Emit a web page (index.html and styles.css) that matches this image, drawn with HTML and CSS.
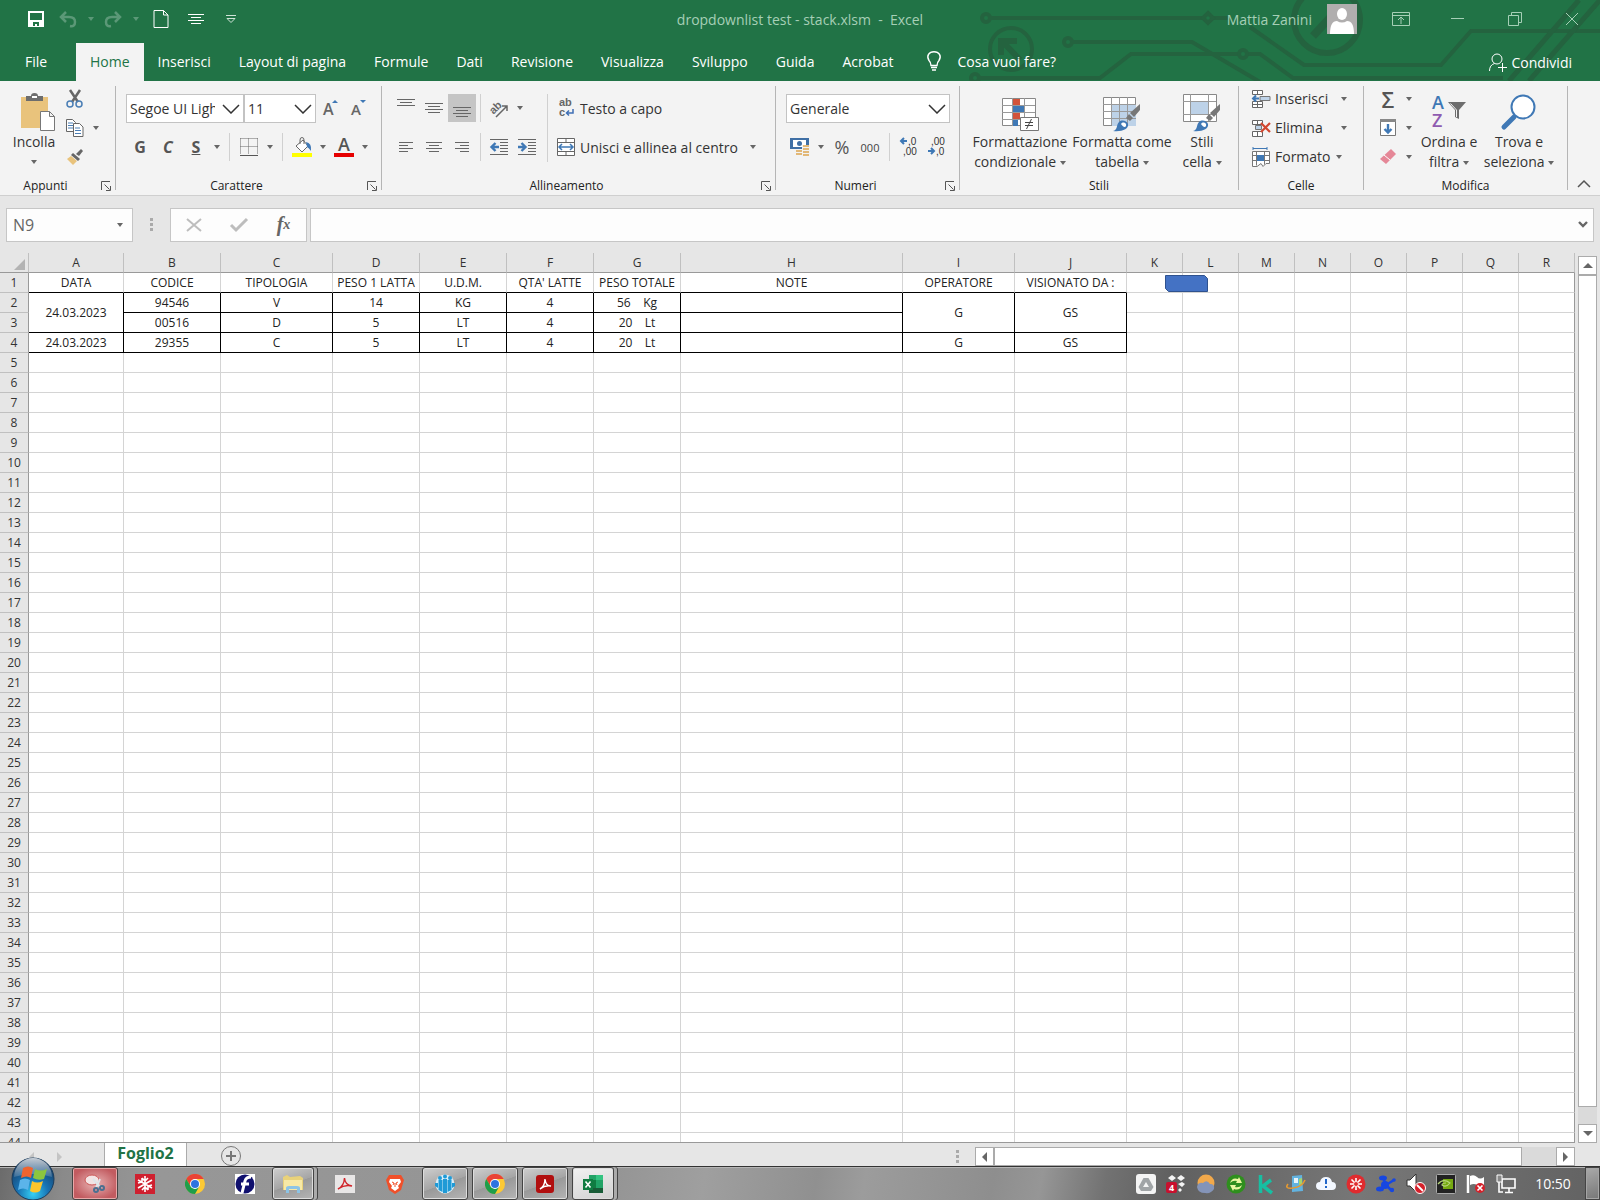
FILE: index.html
```html
<!DOCTYPE html>
<html lang="it">
<head>
    <meta charset="UTF-8">
    <meta name="viewport" content="width=device-width, initial-scale=1.0">
    <title>dropdownlist test - stack.xlsm - Excel</title>
    <link rel="stylesheet" href="styles.css">
</head>
<body>

    <!-- Shared icon shapes -->
    <svg class="sprite" aria-hidden="true">
        <symbol id="launcher" viewBox="0 0 10 10">
            <path d="M.5 9V.5H9M3.5 3.5l5 5M9.5 5v4.5H5" fill="none" stroke="#555"/>
        </symbol>
        <symbol id="brush" viewBox="0 0 28 28">
            <path d="M27 0v6l-6 7-4-4z" fill="#777"/>
            <path d="M16 10l4 4-3 3-4-3z" fill="#777"/>
            <path d="M0 27c5-1 3-6 6-9 3-3 8-1 9 2 1 5-6 8-15 7z" fill="#3f78b5"/>
            <path d="M8 20c2-3 6-1 5 2-1 2-3 1-5-2z" fill="#fff"/>
        </symbol>
        <symbol id="chrome" viewBox="0 0 20 20">
            <circle cx="10" cy="10" r="10" fill="#fcc934"/>
            <path d="M1.300 5A10 10 0 0 1 18.700 5H10L5.700 12.500z" fill="#ea4335"/>
            <path d="M1.300 5A10 10 0 0 0 10 20l4.300-7.500H5.700z" fill="#1e9e4a"/>
            <circle cx="10" cy="10" r="5" fill="#fff"/>
            <circle cx="10" cy="10" r="4" fill="#2f73e0"/>
        </symbol>
    </svg>

    <header class="top">
        <svg class="circuit" viewBox="900 0 700 81" aria-hidden="true">
            <g fill="none" stroke="#24633f" stroke-width="4">
                <circle cx="986" cy="18" r="4"/>
                <path d="M991 18h213m9 0h15M1250 27l54 38h137l30-34h129"/>
                <path d="M1208 13l5 5-5 5-5-5z"/>
                <circle cx="1068" cy="42" r="4"/>
                <path d="M1073 42h119l68 40"/>
                <circle cx="975" cy="78" r="4"/>
                <path d="M980 78h120l31-24h108m9 0h12l33 24h210"/>
                <circle cx="1243" cy="54" r="4"/>
                <circle cx="1011" cy="49" r="21"/>
                <path d="M1020 60l-17-18M1001 55V41h16" stroke-width="6"/>
                <circle cx="1327" cy="20" r="33" stroke-width="6"/>
                <path d="M1313 36l26-28" stroke-width="8"/>
                <path d="M1509 81l70-81M1529 81l71-81" stroke-width="5"/>
            </g>
        </svg>

        <div class="titlebar">
            <div class="quick">
                <button class="wide" aria-label="Salva"><svg width="16" height="16"><path d="M1 1h14v14H1z" fill="none" stroke="#fff" stroke-width="2"/><path d="M1 9h14v6H1z" fill="#fff"/><path d="M5 11h6v4H9v-2H7v2H5z" fill="#217346"/></svg></button>
                <button class="dim" aria-label="Annulla"><svg width="18" height="16"><path d="M7 1L2 6l5 5M2 6h8q6 0 6 5t-5 4" fill="none" stroke="currentColor" stroke-width="2.500"/></svg></button>
                <button class="drop dim" aria-label="Altre azioni da annullare"><span class="caret"></span></button>
                <button class="dim" aria-label="Ripristina"><svg width="18" height="16"><path d="M11 1l5 5-5 5M16 6H8q-6 0-6 5t5 4" fill="none" stroke="currentColor" stroke-width="2.500"/></svg></button>
                <button class="drop dim" aria-label="Altre azioni da ripristinare"><span class="caret"></span></button>
                <button class="wide" aria-label="Nuovo"><svg width="16" height="18"><path d="M1 .5h9.500L15 5v12.500H1zM10.500.5V5H15" fill="none" stroke="#fff"/></svg></button>
                <button class="wide" aria-label="Allinea al centro"><svg width="16" height="12"><path d="M0 1.500h16M3 4.500h10M0 7.500h16M3 10.500h10" stroke="#fff"/></svg></button>
                <button class="wide" aria-label="Personalizza barra di accesso rapido"><svg width="10" height="8"><path d="M0 .5h10M1 3.500h8L5 7.500z" fill="none" stroke="#cfe3d7"/></svg></button>
            </div>
            <div class="doc-name">dropdownlist test - stack.xlsm &nbsp;-&nbsp; Excel</div>
            <div class="account">
                <span>Mattia Zanini</span>
                <svg width="30" height="30"><path d="M0 0h30v30H0z" fill="#b0aeae"/><ellipse cx="15" cy="10" rx="5" ry="6" fill="#fff"/><path d="M3 30q0-13 7-13 5 3 10 0 7 0 7 13z" fill="#fff"/></svg>
                <div class="window-buttons">
                    <button aria-label="Opzioni barra multifunzione"><svg width="18" height="14"><path d="M.5.5h17v13H.5zM.5 3.500h17M9 12V5M6 8l3-3 3 3" fill="none" stroke="currentColor"/></svg></button>
                    <button aria-label="Riduci a icona"><svg width="14" height="14"><path d="M0 6.500h13" stroke="currentColor"/></svg></button>
                    <button aria-label="Ripristina finestra"><svg width="14" height="14"><path d="M.5 3.500h10v10H.5zM3.500 3V.5h10v10H11" fill="none" stroke="currentColor"/></svg></button>
                    <button aria-label="Chiudi"><svg width="14" height="14"><path d="M1 1l12 12M13 1L1 13" stroke="currentColor"/></svg></button>
                </div>
            </div>
        </div>

        <nav class="tabs">
            <button class="file">File</button>
            <button class="active">Home</button>
            <button>Inserisci</button>
            <button>Layout di pagina</button>
            <button>Formule</button>
            <button>Dati</button>
            <button>Revisione</button>
            <button>Visualizza</button>
            <button>Sviluppo</button>
            <button>Guida</button>
            <button>Acrobat</button>
            <button class="tell-me"><svg width="16" height="20"><path d="M5 14.500q0-3-2-5C0 5 3 .8 8 .8s8 4.200 5 8.700q-2 2-2 5zM5 16.500h6M6 19h4" fill="none" stroke="#fff" stroke-width="1.400"/></svg>Cosa vuoi fare?</button>
            <button class="share"><svg width="18" height="19"><circle cx="8" cy="6" r="5" fill="none" stroke="#fff"/><path d="M.5 18q0-6 5-7.500M9 14.500h9M13.500 10v9" fill="none" stroke="#fff"/></svg>Condividi</button>
        </nav>
    </header>

    <section class="ribbon">
        <div class="group clipboard">
            <div class="tools">
                <button class="big paste">
                    <svg width="44" height="38" viewBox="-8 0 44 38"><path d="M1 4h27v31H1z" fill="#e9c37c"/><path d="M6 8V3h5q0-3 3.500-3T18 3h5v5z" fill="#6d6d6d"/><path d="M12 3h5v2h-5z" fill="#fff"/><path d="M20.500 18.500h9l5 5v14h-14zM29.500 18.500v5h5" fill="#fff" stroke="#777"/></svg>
                    <span>Incolla</span>
                    <span class="caret"></span>
                </button>
                <div class="stack">
                    <div class="row"><button class="icon" aria-label="Taglia"><svg width="18" height="20"><path d="M4 1l8 12M14 1L6 13" stroke="#666" stroke-width="2.500"/><circle cx="4" cy="15" r="3" fill="none" stroke="#4a7eb5" stroke-width="1.500"/><circle cx="13" cy="15" r="3" fill="none" stroke="#4a7eb5" stroke-width="1.500"/></svg></button></div>
                    <div class="row"><button class="icon" aria-label="Copia"><svg width="18" height="18"><path d="M.5.5h6l3 3v9h-9z" fill="#fff" stroke="#666"/><path d="M2 4h5M2 6.500h6M2 9h6" stroke="#4a7eb5"/><path d="M7.500 4.500h6l3.500 3.500v9.500H7.500z" fill="#fff" stroke="#666"/><path d="M9 9h5M9 11.500h6M9 14.500h6" stroke="#4a7eb5"/></svg></button><button class="drop" aria-label="Opzioni copia"><span class="caret"></span></button></div>
                    <div class="row"><button class="icon" aria-label="Copia formato"><svg width="18" height="18"><path d="M15 1l2 2-4 5-3-2z" fill="#666"/><path d="M7 5l7 6-2 2-7-6z" fill="#666"/><path d="M5 8l6 5-4 4-6-6z" fill="#e9c37c"/></svg></button></div>
                </div>
            </div>
            <div class="group-name"><span>Appunti</span><button aria-label="Apri Appunti"><svg width="10" height="10"><use href="#launcher"/></svg></button></div>
        </div>

        <div class="group font">
            <div class="tools lines">
                <div class="row">
                    <select class="font-name" aria-label="Tipo di carattere"><option>Segoe UI Light</option></select>
                    <select class="font-size" aria-label="Dimensione carattere"><option>11</option></select>
                    <button class="icon" aria-label="Aumenta dimensione carattere"><svg width="16" height="20"><text x="1" y="17" class="letter-a">A</text><path d="M10 5l3-3 3 3z" fill="#3f78b5"/></svg></button>
                    <button class="icon" aria-label="Riduci dimensione carattere"><svg width="16" height="20"><text x="1" y="17" class="letter-a small">A</text><path d="M10 2l3 3 3-3z" fill="#3f78b5"/></svg></button>
                </div>
                <div class="row">
                    <button class="icon letter">G</button>
                    <button class="icon letter italic">C</button>
                    <button class="icon letter underline">S</button>
                    <button class="drop" aria-label="Opzioni sottolineatura"><span class="caret"></span></button>
                    <span class="sep"></span>
                    <button class="icon" aria-label="Bordi"><svg width="18" height="18"><path d="M.5.5h17M.5 8.500h17M.5.500v16M8.500.5v16M17.500.5v16" stroke="#666" stroke-dasharray="1 1"/><path d="M0 17.500h18" stroke="#555"/></svg></button>
                    <button class="drop" aria-label="Opzioni bordi"><span class="caret"></span></button>
                    <span class="sep"></span>
                    <button class="icon" aria-label="Colore riempimento"><svg width="20" height="20"><path d="M4 9l7-6 5 6-6 6z" fill="#fff" stroke="#666"/><path d="M8 7V3q0-2.500 2-2.500T12 3v4" fill="none" stroke="#666"/><path d="M14 5q6 1 5 9-2-3-4-4z" fill="#3f78b5"/><path d="M0 16h20v4H0z" fill="#ff0"/></svg></button>
                    <button class="drop" aria-label="Altri colori riempimento"><span class="caret"></span></button>
                    <button class="icon" aria-label="Colore carattere"><svg width="20" height="20"><text x="10" y="14" class="letter-a centered">A</text><path d="M0 16h20v4H0z" fill="#e60000"/></svg></button>
                    <button class="drop" aria-label="Altri colori carattere"><span class="caret"></span></button>
                </div>
            </div>
            <div class="group-name"><span>Carattere</span><button aria-label="Apri Carattere"><svg width="10" height="10"><use href="#launcher"/></svg></button></div>
        </div>

        <div class="group alignment">
            <div class="tools">
                <div class="lines">
                    <div class="row">
                        <button class="icon" aria-label="Allinea in alto"><svg width="18" height="20"><path d="M0 1.500h18M3 4.500h12M0 7.500h18" stroke="#666"/></svg></button>
                        <button class="icon" aria-label="Allinea al centro verticalmente"><svg width="18" height="20"><path d="M0 5.500h18M3 8.500h12M0 11.500h18M3 14.500h12" stroke="#666"/></svg></button>
                        <button class="icon pressed" aria-label="Allinea in basso"><svg width="18" height="20"><path d="M0 9.500h18M3 12.500h12M0 15.500h18M3 18.500h12" stroke="#666"/></svg></button>
                        <span class="sep"></span>
                        <button class="icon" aria-label="Orientamento"><svg width="20" height="20"><g transform="rotate(-45 8 9)"><text x="0" y="12" class="glyph">ab</text></g><path d="M7 19L18 8M13 8h5v5" fill="none" stroke="#666" stroke-width="1.500"/></svg></button>
                        <button class="drop" aria-label="Opzioni orientamento"><span class="caret"></span></button>
                    </div>
                    <div class="row">
                        <button class="icon" aria-label="Allinea a sinistra"><svg width="14" height="12"><path d="M0 1.500h14M0 4.500h9M0 7.500h14M0 10.500h9" stroke="#666"/></svg></button>
                        <button class="icon" aria-label="Centra"><svg width="16" height="12"><path d="M0 1.500h16M3 4.500h10M0 7.500h16M3 10.500h10" stroke="#666"/></svg></button>
                        <button class="icon" aria-label="Allinea a destra"><svg width="14" height="12"><path d="M0 1.500h14M5 4.500h9M0 7.500h14M5 10.500h9" stroke="#666"/></svg></button>
                        <span class="sep"></span>
                        <button class="icon" aria-label="Riduci rientro"><svg width="18" height="16"><path d="M0 .5h18M10 3.500h8M10 6.500h8M10 9.500h8M10 12.500h8M0 15.500h18" stroke="#666"/><path d="M9 8H2M5.500 4L1.500 8l4 4" fill="none" stroke="#3f78b5" stroke-width="2.400"/></svg></button>
                        <button class="icon" aria-label="Aumenta rientro"><svg width="18" height="16"><path d="M0 .5h18M10 3.500h8M10 6.500h8M10 9.500h8M10 12.500h8M0 15.500h18" stroke="#666"/><path d="M0 8h7M3.500 4l4 4-4 4" fill="none" stroke="#3f78b5" stroke-width="2.400"/></svg></button>
                    </div>
                </div>
                <span class="sep tall"></span>
                <div class="lines">
                    <div class="row">
                        <button class="labelled"><svg width="18" height="22"><text x="2" y="9" class="glyph">ab</text><text x="2" y="19" class="glyph">c</text><path d="M16 12v4h-6M12 13.500L9.500 16l2.500 2.500" fill="none" stroke="#3f6fb5" stroke-width="1.500"/></svg>Testo a capo</button>
                    </div>
                    <div class="row">
                        <button class="labelled"><svg width="18" height="18"><path d="M.5.5h17v17H.5z" fill="#fff" stroke="#666"/><path d="M.5 4.500h17M.5 13.500h17M9 .5v4M9 13.500v4" stroke="#666"/><path d="M2 9h14M5 6L2 9l3 3M13 6l3 3-3 3" fill="none" stroke="#3f78b5" stroke-width="1.500"/></svg>Unisci e allinea al centro</button>
                        <button class="drop" aria-label="Opzioni unione"><span class="caret"></span></button>
                    </div>
                </div>
            </div>
            <div class="group-name"><span>Allineamento</span><button aria-label="Apri Allineamento"><svg width="10" height="10"><use href="#launcher"/></svg></button></div>
        </div>

        <div class="group number">
            <div class="tools lines">
                <div class="row">
                    <select class="number-format" aria-label="Formato numero"><option>Generale</option></select>
                </div>
                <div class="row">
                    <button class="icon" aria-label="Formato valuta"><svg width="20" height="20"><path d="M0 1h19v11H0z" fill="#3f6fa5"/><path d="M3 3h13v7H3z" fill="#fff"/><circle cx="9.500" cy="6.500" r="2.500" fill="#3f6fa5"/><path d="M12 8h8v11h-8z" fill="#f2f2f2"/><g fill="#e2b877"><path d="M13 8h6v2h-6zM13 11h6v2h-6zM13 14h6v2h-6zM13 17h6v2h-6zM6 13h6v2H6zM6 16h6v2H6z"/></g></svg></button>
                    <button class="drop" aria-label="Altre valute"><span class="caret"></span></button>
                    <button class="icon percent">%</button>
                    <button class="icon zeros">000</button>
                    <span class="sep"></span>
                    <button class="icon" aria-label="Aumenta decimali"><svg width="18" height="22"><path d="M7 5H1M4 2L1 5l3 3" fill="none" stroke="#3f78b5" stroke-width="2"/><text x="8" y="9" class="digits">,0</text><text x="3" y="19" class="digits">,00</text></svg></button>
                    <button class="icon" aria-label="Diminuisci decimali"><svg width="18" height="22"><text x="3" y="9" class="digits">,00</text><path d="M0 15h6M3 12l3 3-3 3" fill="none" stroke="#3f78b5" stroke-width="2"/><text x="8" y="19" class="digits">,0</text></svg></button>
                </div>
            </div>
            <div class="group-name"><span>Numeri</span><button aria-label="Apri Numeri"><svg width="10" height="10"><use href="#launcher"/></svg></button></div>
        </div>

        <div class="group styles">
            <div class="tools">
                <button class="big conditional">
                    <svg width="38" height="38"><path d="M1.500 5.500h33v27h-33z" fill="#fff" stroke="#888"/><path d="M12 6h7v6h-7zM12 20h7v6h-7z" fill="#d2533a"/><path d="M12 13h11v6H12zM12 27h5v6h-5z" fill="#3f78b5"/><path d="M1 12.500h33M1 19.500h33M1 26.500h33M11.500 5v28M23.500 5v28" stroke="#999"/><path d="M19.500 24.500h18v13h-18z" fill="#fff" stroke="#777"/><path d="M24 29.500h8M24 32.500h8M30.500 26l-5 10" stroke="#444"/></svg>
                    <span>Formattazione</span>
                    <span>condizionale <i class="caret"></i></span>
                </button>
                <button class="big as-table">
                    <svg width="38" height="38"><path d="M.5 4.500h32v28H.5z" fill="#fff" stroke="#888"/><path d="M9 12h24v21H9z" fill="#bdd2e8"/><path d="M0 11.500h33M0 18.500h33M0 25.500h33M8.500 4v28M16.500 4v28M24.500 4v28" stroke="#999"/><use href="#brush" x="10" y="11" width="28" height="28"/></svg>
                    <span>Formatta come</span>
                    <span>tabella <i class="caret"></i></span>
                </button>
                <button class="big">
                    <svg width="38" height="38"><path d="M.5 1.500h33v27H.5z" fill="#fff" stroke="#888"/><path d="M0 8.500h33M0 21.500h33M7.500 1v27M25.500 1v27" stroke="#999"/><path d="M8 9h17v12H8z" fill="#bdd2e8"/><use href="#brush" x="10" y="11" width="28" height="28"/></svg>
                    <span>Stili</span>
                    <span>cella <i class="caret"></i></span>
                </button>
            </div>
            <div class="group-name"><span>Stili</span></div>
        </div>

        <div class="group cells">
            <div class="tools stack">
                <div class="row"><button class="labelled"><svg width="18" height="20"><path d="M.5 1.500h10v4H.5zM5.500 1.500v4M.5 12.500h10v6H.5zM5.500 12.500v6M.5 15.500h10" fill="#fff" stroke="#666"/><path d="M8 7.500h10v4H8z" fill="#bdd2e8" stroke="#777"/><path d="M7 9.500H1M4 6.500l-3 3 3 3" fill="none" stroke="#3f78b5" stroke-width="2"/></svg>Inserisci</button><button class="drop" aria-label="Opzioni inserisci"><span class="caret"></span></button></div>
                <div class="row"><button class="labelled"><svg width="18" height="20"><path d="M.5 2.500h10v4H.5zM5.500 2.500v4M.5 13.500h10v5H.5zM5.500 13.500v5" fill="#fff" stroke="#666"/><path d="M3.500 7.500h6v4h-6z" fill="#bdd2e8" stroke="#777"/><path d="M9 5l9 9M18 5l-9 9" stroke="#d2472f" stroke-width="2.200"/></svg>Elimina</button><button class="drop" aria-label="Opzioni elimina"><span class="caret"></span></button></div>
                <div class="row"><button class="labelled"><svg width="18" height="20"><path d="M1 1.500h14M1 0v3M15 0v3" stroke="#3f78b5"/><path d="M.5 4.500h17v12H14l-3 3-2-3-4 3H.5z" fill="#fff" stroke="#777"/><path d="M.5 8.500h17M.5 13.500h17M4.500 4.500v14M12.500 4.500v13" stroke="#777"/><path d="M5 8h7v6H5z" fill="#3f78b5"/></svg>Formato <i class="caret"></i></button></div>
            </div>
            <div class="group-name"><span>Celle</span></div>
        </div>

        <div class="group editing">
            <div class="tools">
                <div class="stack">
                    <div class="row"><button class="icon sum">Σ</button><button class="drop" aria-label="Altre funzioni"><span class="caret"></span></button></div>
                    <div class="row"><button class="icon" aria-label="Riempimento"><svg width="16" height="18"><path d="M.5.5h15v16H.5z" fill="#fff" stroke="#777"/><path d="M0 0h16v3H0z" fill="#888"/><path d="M8 5v8M4.500 10L8 13.500l3.500-3.500" fill="none" stroke="#3f78b5" stroke-width="2.400"/></svg></button><button class="drop" aria-label="Opzioni riempimento"><span class="caret"></span></button></div>
                    <div class="row"><button class="icon" aria-label="Cancella"><svg width="16" height="16"><path d="M11 0l5 5-10 10-6-5z" fill="#e58797"/><path d="M4 6l6 5" stroke="#fff"/></svg></button><button class="drop" aria-label="Opzioni cancella"><span class="caret"></span></button></div>
                </div>
                <button class="big sort">
                    <svg width="34" height="38"><text x="0" y="16" class="sort-letter from">A</text><text x="0" y="34" class="sort-letter to">Z</text><path d="M16 9h18l-7 8v9l-4-2v-7z" fill="#6d6d6d"/><path d="M18.500 10.500l6 6.500v7" fill="none" stroke="#f3f3f3"/></svg>
                    <span>Ordina e</span>
                    <span>filtra <i class="caret"></i></span>
                </button>
                <button class="big find">
                    <svg width="36" height="38"><path d="M13 24L3 34" stroke="#3f78b5" stroke-width="5" stroke-linecap="round"/><circle cx="22" cy="14" r="11.500" fill="#fff" stroke="#3f78b5" stroke-width="2"/></svg>
                    <span>Trova e</span>
                    <span>seleziona <i class="caret"></i></span>
                </button>
            </div>
            <div class="group-name"><span>Modifica</span></div>
        </div>
        <button class="collapse" aria-label="Comprimi barra multifunzione"><svg width="12" height="8"><path d="M0 7l6-6 6 6" fill="none" stroke="#555" stroke-width="1.500"/></svg></button>
    </section>

    <section class="formula-bar">
        <div class="name-box">
            <input type="text" value="N9" aria-label="Casella Nome">
            <button class="drop" aria-label="Elenco nomi"><span class="caret"></span></button>
        </div>
        <span class="grip"></span>
        <div class="formula-buttons">
            <button aria-label="Annulla immissione"><svg width="16" height="14"><path d="M1 1l14 12M15 1L1 13" stroke="#bdbdbd" stroke-width="2"/></svg></button>
            <button aria-label="Conferma immissione"><svg width="18" height="14"><path d="M1 7l5 5L17 1" fill="none" stroke="#bdbdbd" stroke-width="3"/></svg></button>
            <button class="fx" aria-label="Inserisci funzione">f<sub>x</sub></button>
        </div>
        <div class="formula">
            <input type="text" aria-label="Barra della formula">
            <button aria-label="Espandi barra della formula"><svg width="10" height="8"><path d="M1 1l4 4 4-4" fill="none" stroke="#666" stroke-width="2.400"/></svg></button>
        </div>
    </section>

    <main class="workspace">
        <div class="sheet">
            <table id="grid">
                <colgroup>
                    <col class="w-head"><col class="w-a"><col class="w-b"><col class="w-c">
                    <col class="w-d"><col class="w-d"><col class="w-d"><col class="w-d">
                    <col class="w-h"><col class="w-c"><col class="w-c">
                    <col class="w-k"><col class="w-k"><col class="w-k"><col class="w-k">
                    <col class="w-k"><col class="w-k"><col class="w-k"><col class="w-k">
                </colgroup>
                <thead>
                    <tr>
                        <th class="corner"><svg width="11" height="11"><path d="M11 0v11H0z" fill="#b3b3b3"/></svg></th>
                        <th>A</th><th>B</th><th>C</th><th>D</th><th>E</th><th>F</th><th>G</th><th>H</th><th>I</th>
                        <th>J</th><th>K</th><th>L</th><th>M</th><th>N</th><th>O</th><th>P</th><th>Q</th><th>R</th>
                    </tr>
                </thead>
                <tbody>
                    <tr class="titles">
                        <th>1</th><td>DATA</td><td>CODICE</td><td>TIPOLOGIA</td><td>PESO 1 LATTA</td><td>U.D.M.</td><td>QTA' LATTE</td><td>PESO TOTALE</td><td>NOTE</td><td>OPERATORE</td><td>VISIONATO DA :</td>
                        <td class="free"></td><td class="free"></td><td class="free"></td><td class="free"></td><td class="free"></td><td class="free"></td><td class="free"></td><td class="free"></td>
                    </tr>
                    <tr class="entry">
                        <th>2</th><td rowspan="2">24.03.2023</td><td>94546</td><td>V</td><td>14</td><td>KG</td><td>4</td><td>56 &nbsp;&nbsp; Kg</td><td></td><td rowspan="2">G</td><td rowspan="2">GS</td>
                        <td class="free"></td><td class="free"></td><td class="free"></td><td class="free"></td><td class="free"></td><td class="free"></td><td class="free"></td><td class="free"></td>
                    </tr>
                    <tr class="entry">
                        <th>3</th><td>00516</td><td>D</td><td>5</td><td>LT</td><td>4</td><td>20 &nbsp;&nbsp; Lt</td><td></td>
                        <td class="free"></td><td class="free"></td><td class="free"></td><td class="free"></td><td class="free"></td><td class="free"></td><td class="free"></td><td class="free"></td>
                    </tr>
                    <tr class="entry">
                        <th>4</th><td>24.03.2023</td><td>29355</td><td>C</td><td>5</td><td>LT</td><td>4</td><td>20 &nbsp;&nbsp; Lt</td><td></td><td>G</td><td>GS</td>
                        <td class="free"></td><td class="free"></td><td class="free"></td><td class="free"></td><td class="free"></td><td class="free"></td><td class="free"></td><td class="free"></td>
                    </tr>
                </tbody>
            </table>
            <svg class="shape" width="43" height="17"><path d="M.5.5h39l3 3v13H3.500l-3-3z" fill="#4472c4" stroke="#2f528f"/></svg>
        </div>
        <div class="scroll-y">
            <button aria-label="Scorri in alto"><span class="arrow up"></span></button>
            <div class="track"><div class="thumb"></div></div>
            <button aria-label="Scorri in basso"><span class="arrow down"></span></button>
        </div>
    </main>

    <section class="sheet-tabs">
        <div class="sheet-nav">
            <button aria-label="Foglio precedente"><span class="arrow left"></span></button>
            <button aria-label="Foglio successivo"><span class="arrow right"></span></button>
        </div>
        <button class="sheet-tab">Foglio2</button>
        <button class="add-sheet" aria-label="Nuovo foglio"><svg width="20" height="20"><circle cx="10" cy="10" r="9.500" fill="none" stroke="#777"/><path d="M5 10h10M10 5v10" stroke="#777" stroke-width="2"/></svg></button>
        <span class="grip"></span>
        <div class="scroll-x">
            <button aria-label="Scorri a sinistra"><span class="arrow left"></span></button>
            <div class="track"><div class="thumb"></div></div>
            <button aria-label="Scorri a destra"><span class="arrow right"></span></button>
        </div>
    </section>

    <footer class="taskbar">
        <button class="orb" aria-label="Start">
            <svg width="44" height="44">
                <defs>
                    <radialGradient id="orb-fill" cx="50%" cy="85%" r="80%"><stop offset="0" stop-color="#35d0f5"/><stop offset=".45" stop-color="#1873b4"/><stop offset="1" stop-color="#17395f"/></radialGradient>
                    <linearGradient id="orb-shine" x2="0" y2="1"><stop offset="0" stop-color="#fff" stop-opacity=".75"/><stop offset="1" stop-color="#fff" stop-opacity=".15"/></linearGradient>
                </defs>
                <circle cx="22" cy="22" r="21" fill="url(#orb-fill)" stroke="#1b3c5c"/>
                <path d="M3 20a19 19 0 0 1 38 0q-19-6-38 0z" fill="url(#orb-shine)"/>
                <path d="M12 11q5-3 10 0l-2 10q-4-3-10 0z" fill="#f0642f"/>
                <path d="M24 12q5 3 12 0l-3 10q-6 2-11-1z" fill="#8cc63f"/>
                <path d="M9 23q5-3 10 0l-2 10q-5-3-10 0z" fill="#5bb4ea"/>
                <path d="M21 24q5 3 11 0l-3 10q-5 3-10 0z" fill="#fcc52c"/>
            </svg>
        </button>
        <div class="apps">
            <button class="open alert" aria-label="Strumento di cattura"><svg width="22" height="22"><ellipse cx="8" cy="7" rx="7" ry="5" fill="#f3e4e4" stroke="#c55"/><path d="M9 6l8 9M16 6l-4 9" stroke="#dfe6ea" stroke-width="2"/><circle cx="12" cy="17" r="2" fill="none" stroke="#4a6f90" stroke-width="2"/><circle cx="18" cy="15" r="2" fill="none" stroke="#4a6f90" stroke-width="2"/></svg></button>
            <button aria-label="Mantis"><svg width="20" height="20"><path d="M0 0h20v20H0z" fill="#cf202f"/><path d="M10 2v16M3 6l14 8M3 14l14-8M7 4l3 3 3-3M7 16l3-3 3 3M3 9l4-1V4M17 11l-4 1v4" fill="none" stroke="#fff" stroke-width="1.600"/></svg></button>
            <button aria-label="Chrome"><svg width="20" height="20"><use href="#chrome"/></svg></button>
            <button aria-label="F"><svg width="20" height="20"><path d="M0 0h20v20H0z" fill="#fff"/><circle cx="10" cy="10" r="9.500" fill="#10106e"/><path d="M7 19L10 7q1-4 6-4M6 10h8" fill="none" stroke="#fff" stroke-width="3"/></svg></button>
            <button class="open stacked" aria-label="Esplora risorse"><svg width="22" height="20"><path d="M1 3l4-2 3 2 10-1 3 2v12H1z" fill="#e9d27a"/><path d="M2 6h18v10H2z" fill="#f7e9a6"/><path d="M4 19v-5q0-2 3-2h8q3 0 3 2v5h-3v-4H7v4z" fill="#8cc4e6"/></svg></button>
            <button aria-label="Acrobat Reader"><svg width="20" height="18"><path d="M0 0h20v18H0z" fill="#e8e6e6"/><path d="M3 14q6-3 6.500-11Q10 10 17 11 10 9 3 14z" fill="none" stroke="#d0242a" stroke-width="1.400"/></svg></button>
            <button aria-label="Brave"><svg width="18" height="20"><path d="M3 1h12l3 5-3 10-6 4-6-4L0 6z" fill="#f0502a"/><path d="M4 5h10l1 3-3 4 1 2-4 3-4-3 1-2-3-4z" fill="#fff"/><path d="M6 8l2 1-1 2M12 8l-2 1 1 2M9 9v4" fill="none" stroke="#f0502a"/></svg></button>
            <button class="open" aria-label="Gestione"><svg width="20" height="20"><circle cx="10" cy="10" r="9.500" fill="#d9eef8"/><path d="M8 5h4v14H8zM3.500 6h4v12l-4-2zM12.500 6h4v10l-4 2zM0 9h3v5L0 12zM17 9h3v3l-3 2z" fill="#1f9ad6"/><circle cx="10" cy="2.500" r="2" fill="#1f9ad6"/><circle cx="5" cy="4" r="2" fill="#1f9ad6"/><circle cx="15" cy="4" r="2" fill="#1f9ad6"/></svg></button>
            <button class="open" aria-label="Chrome aperto"><svg width="20" height="20"><use href="#chrome"/></svg></button>
            <button class="open" aria-label="Acrobat"><svg width="18" height="18"><rect width="18" height="18" rx="3" fill="#b10f0f"/><path d="M4 14q5-3 5-10Q9.500 11 15 11 9 10 4 14z" fill="none" stroke="#fff" stroke-width="1.500"/></svg></button>
            <button class="open stacked current" aria-label="Excel"><svg width="20" height="18"><path d="M6 0h14v18H6z" fill="#21a366"/><path d="M6 5h7v8H6z" fill="#107c41"/><path d="M13 0h7v5h-7z" fill="#33c481"/><path d="M13 13h7v5H6v-5z" fill="#185c37"/><path d="M0 4h10v11H0z" fill="#107c41"/><path d="M2.500 6.500l5 6M7.500 6.500l-5 6" stroke="#fff" stroke-width="1.600"/></svg></button>
        </div>
        <div class="tray">
            <button aria-label="Drive"><svg width="20" height="20"><rect width="20" height="20" rx="3" fill="#f4f4f4"/><path d="M7.500 4h5l5 9-2.500 4H5l-2.500-4z" fill="#a0a4a6"/><path d="M10 8l3 5H7z" fill="#f4f4f4"/></svg></button>
            <button aria-label="Dropbox"><svg width="20" height="20"><path d="M2 4l4-3 4 3-4 3zM11 4l4-3 4 3-4 3zM12 10l4-2 3 2-3 3zM12 16l2-2 2 2-2 2z" fill="#f4f4f4"/><rect y="8" width="11" height="11" rx="2" fill="#c8102e"/><text x="3" y="17" class="badge">4</text></svg></button>
            <button aria-label="Meteo"><svg width="20" height="20"><circle cx="10" cy="9" r="8.500" fill="#f2a94b"/><path d="M1 13q1-5 6-4 4-4 7 1 5 0 4 5-3 5-9 4-7 0-8-6z" fill="#8494b8"/></svg></button>
            <button aria-label="Sincronizzazione"><svg width="20" height="20"><circle cx="10" cy="10" r="9.500" fill="#2f8f1e"/><path d="M4 9q2-6 8-4l1-2 3 6h-6l1-2q-4-1-7 2zM16 11q-2 6-8 4l-1 2-3-6h6l-1 2q4 1 7-2z" fill="#eaf7a0"/></svg></button>
            <button aria-label="Kaspersky"><svg width="16" height="18"><path d="M2.500 0v18M13 5l-8 6 9 7" fill="none" stroke="#17bfa2" stroke-width="3.500"/></svg></button>
            <button aria-label="Windows"><svg width="20" height="20"><path d="M6 2l10-1 1 16-11 1z" fill="#62b3e0"/><path d="M8 4l4 0v5H8z" fill="#e9f4fa"/><path d="M13 5l3-1v6l-3 1z" fill="#a5d66a"/><path d="M2 10q-4 5 5 4t12-8" fill="none" stroke="#e69a31" stroke-width="1.600"/></svg></button>
            <button aria-label="Cloud"><svg width="20" height="18"><path d="M5 15q-5 0-5-4t4-4q1-5 6-5t6 5q4 0 4 4t-4 4z" fill="#f2f7ff"/><path d="M10 4v5M10 11v2" stroke="#2166c9" stroke-width="2"/></svg></button>
            <button aria-label="Avira"><svg width="20" height="20"><circle cx="10" cy="10" r="9.500" fill="#e02b2f"/><path d="M10 4v12M4 10h12M5.500 5.500l9 9M14.500 5.500l-9 9" stroke="#fff" stroke-width="1.600"/><circle cx="10" cy="10" r="2" fill="#e02b2f"/></svg></button>
            <button aria-label="Splash"><svg width="20" height="20"><circle cx="9" cy="11" r="4" fill="#1747e0"/><ellipse cx="7" cy="4" rx="4" ry="2.500" fill="#1747e0"/><ellipse cx="4" cy="15" rx="4" ry="2.500" fill="#1747e0"/><path d="M7 4l3 6M4 15l5-3M10 11l8-5M11 12l4 4" stroke="#1747e0" stroke-width="2.500"/><circle cx="18" cy="6" r="1.800" fill="#1747e0"/><circle cx="16" cy="16" r="2.200" fill="#1747e0"/></svg></button>
            <button aria-label="Volume"><svg width="20" height="20"><path d="M1 6h3l6-6v18l-6-6H1z" fill="#fff" stroke="#333"/><circle cx="14" cy="14" r="5.500" fill="#d5202a" stroke="#fff"/><path d="M11 11l6 6" stroke="#fff" stroke-width="1.800"/></svg></button>
            <button aria-label="Nvidia"><svg width="20" height="20"><rect x=".5" y=".5" width="19" height="19" rx="1" fill="#222" stroke="#aaa"/><path d="M7 5h10v10H7z" fill="#76a911"/><path d="M2 10q5-6 12-1-4 5-8 2 0-2 4-2" fill="none" stroke="#b7d67a" stroke-width="1.200"/></svg></button>
            <button aria-label="Centro operativo"><svg width="20" height="20"><path d="M2 1v18" stroke="#fff" stroke-width="2.500"/><path d="M4 2q4-2 7 1t7 0v8q-4 2-7 0t-7 0z" fill="#fff"/><circle cx="14" cy="14" r="5" fill="#d5202a"/><path d="M11.500 11.500l5 5M16.500 11.500l-5 5" stroke="#fff" stroke-width="1.600"/></svg></button>
            <button aria-label="Rete"><svg width="20" height="20"><path d="M6 5h13v9H6zM9 18.500h8M13 14v4M3 8v10h4" fill="none" stroke="#fff" stroke-width="1.600"/><path d="M1 1h5v7H1z" fill="#888" stroke="#fff"/></svg></button>
        </div>
        <time class="clock">10:50</time>
        <button class="show-desktop" aria-label="Mostra desktop"></button>
    </footer>

    <script>
        // Fill the rest of the sheet with empty rows
        const body = document.querySelector('#grid tbody');
        const columns = 18;
        const lastRow = 44;

        for (let row = 5; row <= lastRow; row++) {
            const tr = document.createElement('tr');
            tr.innerHTML = `<th>${row}</th>` + '<td></td>'.repeat(columns);
            body.appendChild(tr);
        }
    </script>
</body>
</html>
```
FILE: styles.css
```css
/* Global Styles */
* {
    box-sizing: border-box;
}

body {
    margin: 0;
    height: 100vh;
    display: flex;
    flex-direction: column;
    overflow: hidden;
    background: #e6e6e6;
    color: #333;
    font-family: "Open Sans", "Noto Sans", sans-serif;
    font-size: 14px;
}

button, input, select {
    font: inherit;
    color: inherit;
    margin: 0;
    padding: 0;
    border: none;
    border-radius: 0;
    background: none;
}

button {
    display: flex;
    align-items: center;
    justify-content: center;
    white-space: nowrap;
}

svg {
    display: block;
    flex: none;
    overflow: visible;
}

.sprite {
    position: absolute;
    width: 0;
    height: 0;
}

.caret {
    display: inline-block;
    border: 3px solid transparent;
    border-top: 4px solid currentColor;
    border-bottom: 0;
    color: #666;
    vertical-align: middle;
}

/* Title bar */
.top {
    position: relative;
    background: #217346;
    color: #fff;
}

.circuit {
    position: absolute;
    top: 0;
    right: 0;
    width: 700px;
    height: 81px;
    overflow: hidden;
}

.titlebar {
    position: relative;
    display: grid;
    grid-template-columns: 1fr auto 1fr;
    align-items: center;
    height: 38px;
}

.quick {
    display: flex;
    align-items: center;
    padding-left: 18px;
}

.quick button {
    width: 30px;
    height: 24px;
}

.quick .wide {
    width: 35px;
}

.quick .drop {
    width: 15px;
}

.dim, .dim .caret {
    color: #5b9877;
}

.doc-name, .account {
    color: #a6cfb6;
}

.account {
    display: flex;
    align-items: center;
    justify-content: flex-end;
    gap: 15px;
}

.window-buttons {
    display: flex;
}

.window-buttons button {
    width: 57px;
    height: 38px;
}

/* Ribbon tabs */
.tabs {
    position: relative;
    display: flex;
    height: 43px;
    padding-top: 5px;
}

.tabs button {
    padding: 0 14px 2px;
}

.tabs .file {
    width: 76px;
    padding-right: 18px;
}

.tabs .active {
    background: #f3f3f3;
    color: #217346;
}

.tabs .tell-me {
    gap: 15px;
    padding-left: 19px;
}

.tabs .share {
    gap: 4px;
    margin-left: auto;
    padding: 0 28px 0 0;
}

/* Ribbon */
.ribbon {
    display: flex;
    height: 115px;
    padding: 5px 0;
    background: #f3f3f3;
    border-bottom: 1px solid #cfcfcf;
}

.group {
    display: flex;
    flex-direction: column;
    flex: none;
    padding-left: 10px;
    border-right: 1px solid #b5b5b5;
}

.clipboard { width: 116px; padding-left: 7px; }
.font { width: 266px; }
.alignment { width: 394px; }
.number { width: 184px; }
.styles { width: 279px; }
.cells { width: 125px; }
.editing { width: 204px; }

.tools {
    display: flex;
    flex: 1;
}

.row {
    display: flex;
    height: 28px;
}

.stack {
    display: flex;
    flex-direction: column;
    margin-top: -2px;
}

.stack .row {
    height: 29px;
}

.lines {
    display: flex;
    flex-direction: column;
    gap: 11px;
    padding-top: 8px;
}

.icon {
    width: 28px;
}

.drop {
    width: 14px;
}

.pressed {
    background: #c5c5c5;
}

.sep {
    width: 1px;
    margin: 0 5px;
    background: #d0d0d0;
}

.alignment .sep {
    margin: 0 4px;
}

.alignment .tall {
    height: 68px;
    margin: 8px 6px 0;
}

.labelled {
    gap: 5px;
    padding: 0 8px 0 3px;
}

.cells .labelled {
    justify-content: flex-start;
    min-width: 88px;
}

.big {
    display: block;
    width: 56px;
    height: 88px;
    padding-top: 4px;
    text-align: center;
    line-height: 20px;
}

.big svg {
    margin: 0 auto 1px;
}

.big span {
    display: block;
}

.big > .caret {
    width: 6px;
    margin: 8px auto;
}

.paste { width: 54px; }
.conditional { width: 100px; }
.as-table { width: 104px; }
.sort { width: 66px; }
.find { width: 74px; }

.letter {
    font-size: 16px;
    font-weight: 700;
    color: #555;
}

.italic {
    font-style: italic;
}

.underline {
    text-decoration: underline;
}

.letter-a {
    font-size: 16px;
    font-weight: 600;
    fill: #666;
}

.letter-a.small {
    font-size: 15px;
}

.letter-a.centered {
    font-size: 18px;
    text-anchor: middle;
    fill: #555;
}

.percent {
    font-size: 18px;
    color: #555;
}

.zeros {
    font-size: 11px;
    color: #444;
}

.sum {
    font-size: 22px;
    font-weight: 600;
    line-height: 22px;
    color: #555;
}

.glyph {
    font-family: "Liberation Sans", sans-serif;
    font-size: 11px;
    font-weight: 700;
    fill: #666;
}

.digits {
    font-family: "Liberation Sans", sans-serif;
    font-size: 10px;
    fill: #333;
}

.sort-letter {
    font-size: 18px;
    font-weight: 600;
}

.from { fill: #3f78b5; }
.to { fill: #8f5bb0; }

.ribbon select {
    appearance: none;
    height: 29px;
    padding: 0 28px 0 3px;
    border: 1px solid #c3c3c3;
    background: #fff url("data:image/svg+xml,%3Csvg xmlns='http://www.w3.org/2000/svg' width='18' height='10'%3E%3Cpath d='M1 1l8 8 8-8' fill='none' stroke='%23333' stroke-width='1.500'/%3E%3C/svg%3E") no-repeat right 3px center;
}

.ribbon .font-name { width: 118px; }
.ribbon .font-size { width: 72px; }
.ribbon .number-format { width: 164px; }

.group-name {
    display: flex;
    align-items: center;
    margin-left: -10px;
    padding-top: 6px;
    height: 14px;
    font-size: 12px;
    line-height: 14px;
    color: #222;
}

.group-name span {
    flex: 1;
    text-align: center;
}

.group-name button {
    justify-content: flex-end;
    width: 24px;
    padding-right: 4px;
}

.clipboard .group-name {
    margin-left: -7px;
}

.collapse {
    align-self: flex-end;
    width: 32px;
    height: 12px;
}

/* Formula bar */
.formula-bar {
    display: flex;
    align-items: center;
    height: 57px;
    padding: 0 6px;
}

.name-box, .formula-buttons, .formula {
    display: flex;
    align-items: center;
    height: 34px;
    background: #fdfdfd;
    border: 1px solid #c6c6c6;
}

.name-box {
    width: 127px;
    padding: 0 5px 0 6px;
}

.name-box input {
    flex: 1;
    min-width: 0;
    font-size: 16px;
    color: #666;
}

.grip {
    width: 3px;
    height: 13px;
    background: repeating-linear-gradient(#aaa 0 3px, transparent 3px 5px);
}

.formula-bar .grip {
    margin: 0 17px;
}

.formula-buttons {
    width: 137px;
}

.formula-buttons button {
    flex: 1;
}

.formula-buttons .fx {
    font-family: "Liberation Serif", serif;
    font-size: 20px;
    font-style: italic;
    font-weight: 700;
    color: #666;
}

.fx sub {
    font-size: 14px;
}

.formula {
    flex: 1;
    margin-left: 3px;
}

.formula input {
    flex: 1;
    height: 32px;
}

.formula button {
    width: 20px;
}

/* Sheet */
.workspace {
    display: flex;
    flex: 1;
    min-height: 0;
}

.sheet {
    position: relative;
    flex: 1;
    overflow: hidden;
    border-bottom: 1px solid #999;
}

table {
    width: 1575px;
    table-layout: fixed;
    border-collapse: separate;
    border-spacing: 0;
    font-size: 12px;
    line-height: 16px;
}

.w-head { width: 29px; }
.w-a { width: 95px; }
.w-b { width: 97px; }
.w-c { width: 112px; }
.w-d { width: 87px; }
.w-h { width: 222px; }
.w-k { width: 56px; }

th, td {
    height: 20px;
    padding: 0;
    border: 0 solid #d4d4d4;
    border-width: 0 1px 1px 0;
    text-align: center;
    white-space: nowrap;
}

td {
    background: #fff;
    color: #222;
}

th {
    font-weight: 400;
    color: #333;
    background: #e6e6e6;
    border-color: #c0c0c0;
}

thead th {
    border-bottom-color: #999;
}

tbody th {
    border-right-color: #999;
}

.corner svg {
    margin: 3px 3px 0 auto;
}

.titles td:not(.free) {
    border-bottom-color: #000;
}

.entry td:not(.free) {
    border-color: #000;
}

td:last-child {
    border-right-color: #999;
}

/* Snipped rectangle drawn over K1:L1 */
.shape {
    position: absolute;
    top: 22px;
    left: 1165px;
}

/* Scroll bars */
.scroll-y {
    display: flex;
    flex-direction: column;
    width: 25px;
    padding: 3px 3px 0;
}

.scroll-x {
    display: flex;
    width: 600px;
    height: 19px;
    margin: 4px 25px 0 16px;
}

.scroll-y button, .scroll-x button {
    flex: none;
    width: 19px;
    height: 19px;
    background: #fff;
    border: 1px solid #ababab;
}

.track {
    flex: 1;
    background: #dadada;
}

.thumb {
    background: #fff;
    border: 1px solid #ababab;
}

.scroll-y .thumb {
    height: 98%;
}

.scroll-x .thumb {
    width: 94%;
    height: 19px;
}

.arrow {
    border: 5px solid transparent;
    color: #666;
}

.up { border-top: 0; border-bottom-color: currentColor; }
.down { border-bottom: 0; border-top-color: currentColor; }
.left { border-left: 0; border-right-color: currentColor; }
.right { border-right: 0; border-left-color: currentColor; }

/* Sheet tabs */
.sheet-tabs {
    display: flex;
    height: 23px;
}

.sheet-nav {
    display: flex;
    justify-content: center;
    gap: 4px;
    width: 104px;
    padding-right: 14px;
}

.sheet-nav button {
    width: 24px;
    height: 27px;
}

.sheet-nav .arrow {
    color: #c4c4c4;
}

.sheet-tab {
    width: 83px;
    padding-bottom: 3px;
    background: #fff;
    border: 1px solid #ababab;
    border-top: 0;
    border-bottom: 0;
    color: #217346;
    font-size: 16px;
    font-weight: 700;
    line-height: 20px;
}

.add-sheet {
    width: 88px;
    height: 26px;
}

.sheet-tabs .grip {
    margin: 7px 0 0 auto;
}

/* Taskbar */
.taskbar {
    position: relative;
    display: flex;
    height: 34px;
    padding-left: 72px;
    border-top: 1px solid #333;
    box-shadow: inset 0 1px #b5b5b5;
    background: linear-gradient(100deg, #6b6b6b, #8a8a8a 4%, #979797 10%, #949494 38%, #9f9f9f 44%, #909090 51%, #9c9c9c 54%, #8e8e8e 62%, #969696 65%, #727272 69%, #606060 73%, #777 85%, #626262);
}

.orb {
    position: absolute;
    left: 11px;
    top: -10px;
}

.apps {
    display: flex;
    gap: 4px;
}

.apps button {
    width: 46px;
    height: 33px;
}

.apps .open {
    border: 1px solid #444;
    border-radius: 3px;
    background: linear-gradient(160deg, #cfcfcf, #a5a5a5 50%, #999 51%, #b4b4b4);
    box-shadow: inset 0 0 0 1px #ddd;
}

.apps .alert {
    background: radial-gradient(#e9b5b5, #c25b60 75%);
    box-shadow: inset 0 0 0 1px #e8a8a8;
}

.apps .stacked {
    width: 42px;
    margin-right: 4px;
    box-shadow: inset 0 0 0 1px #ddd, 3px 0 #aaa, 4px 0 #444;
}

.apps .current {
    background: linear-gradient(160deg, #f2f2f2, #d0d0d0);
}

.tray {
    display: flex;
    margin-left: auto;
}

.tray button {
    width: 30px;
}

.badge {
    font-size: 9px;
    font-weight: 700;
    fill: #fff;
}

.clock {
    width: 64px;
    text-align: center;
    line-height: 34px;
    color: #fff;
}

.show-desktop {
    width: 15px;
    border: 1px solid #444;
    background: linear-gradient(160deg, #aaa, #777);
    box-shadow: inset 0 0 0 1px #a5a5a5;
}
```
